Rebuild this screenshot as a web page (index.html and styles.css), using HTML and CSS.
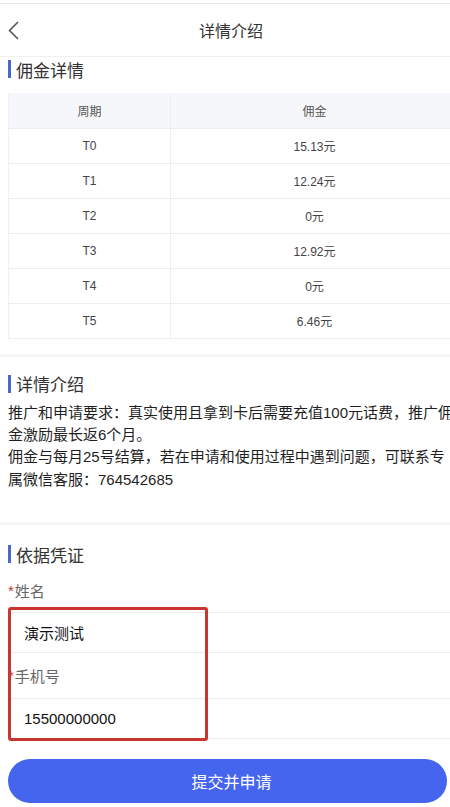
FILE: index.html
```html
<!DOCTYPE html>
<html lang="zh-CN">
<head>
    <meta charset="UTF-8">
    <meta name="viewport" content="width=device-width, initial-scale=1.0">
    <title>详情介绍</title>
    <link rel="stylesheet" href="styles.css">
</head>
<body>
    <div class="page">
        <div class="header">
            <a class="back" href="#">
                <svg width="12" height="19" viewBox="0 0 12 19">
                    <polyline points="10,1 1.5,9.5 10,18" fill="none" stroke="#555" stroke-width="1.6"/>
                </svg>
            </a>
            <div class="header-title">详情介绍</div>
            <div></div>
        </div>

        <div class="section section-commission">
            <h2 class="section-title">佣金详情</h2>
            <table class="commission-table">
                <thead>
                    <tr><th class="col-period">周期</th><th>佣金</th></tr>
                </thead>
                <tbody>
                    <tr><td>T0</td><td>15.13元</td></tr>
                    <tr><td>T1</td><td>12.24元</td></tr>
                    <tr><td>T2</td><td>0元</td></tr>
                    <tr><td>T3</td><td>12.92元</td></tr>
                    <tr><td>T4</td><td>0元</td></tr>
                    <tr><td>T5</td><td>6.46元</td></tr>
                </tbody>
            </table>
        </div>

        <div class="divider"></div>

        <div class="section section-intro">
            <h2 class="section-title">详情介绍</h2>
            <p class="intro-text">推广和申请要求：真实使用且拿到卡后需要充值100元话费，推广佣金激励最长返6个月。</p>
            <p class="intro-text">佣金与每月25号结算，若在申请和使用过程中遇到问题，可联系专属微信客服：764542685</p>
        </div>

        <div class="divider"></div>

        <div class="section section-form">
            <h2 class="section-title">依据凭证</h2>
            <div class="form">
                <div class="field-label"><span class="required">*</span>姓名</div>
                <div class="field-input">演示测试</div>
                <div class="field-label"><span class="required">*</span>手机号</div>
                <div class="field-input">15500000000</div>
                <div class="highlight-box"></div>
            </div>
            <button class="submit-btn">提交并申请</button>
        </div>
    </div>
</body>
</html>
```

FILE: styles.css
```css
*{
    margin: 0;
    padding: 0;
    box-sizing: border-box;
}

html, body {
    overflow: hidden;
    background: #fff;
}

body {
    font-family: 'Liberation Sans', 'Noto Sans CJK SC', sans-serif;
    color: #333;
}

.page {
    width: 466px;
}

.header {
    margin-top: 3px;
    height: 54px;
    border-top: 1px solid #e6e6e6;
    border-bottom: 1px solid #f0f0f0;
    display: grid;
    grid-template-columns: 40px 1fr 40px;
    align-items: center;
    padding: 0 12px 0 8px;
}

.back {
    display: flex;
    align-items: center;
}

.header-title {
    text-align: center;
    font-size: 16px;
    color: #333;
}

.section {
    padding: 0 8px;
}

.section-title {
    display: flex;
    align-items: center;
    height: 24px;
    font-size: 17px;
    font-weight: normal;
    color: #333;
}

.section-title::before {
    content: "";
    width: 3px;
    height: 18px;
    background: #4a67c9;
    margin-right: 5px;
}

.section-commission {
    padding-bottom: 15px;
}

.commission-table {
    margin-top: 12px;
    width: 100%;
    border-collapse: collapse;
    border-left: 1px solid #eef0f4;
    font-size: 12px;
    color: #444;
}

.commission-table th,
.commission-table td {
    height: 35px;
    text-align: center;
    font-weight: normal;
    border-bottom: 1px solid #ebedf1;
}

.commission-table th {
    background: #f5f7fa;
    color: #555;
}

.commission-table .col-period,
.commission-table td:first-child {
    width: 162px;
    border-right: 1px solid #eceef2;
}

.divider {
    height: 3px;
    background: #f5f5f6;
}

.section-intro {
    padding-top: 15px;
    padding-bottom: 31px;
}

.section-intro .section-title {
    margin-bottom: 6px;
}

.intro-text {
    font-size: 15px;
    line-height: 22.4px;
    color: #1f1f1f;
}

.section-form {
    padding-top: 17px;
    padding-bottom: 10px;
}

.form {
    position: relative;
    margin-top: 2px;
}

.field-label {
    height: 45px;
    display: flex;
    align-items: center;
    font-size: 15px;
    color: #666;
}

.form .field-label:first-child {
    height: 44px;
}

.required {
    color: #c0392b;
    margin-right: 1px;
}

.field-input {
    height: 41px;
    display: flex;
    align-items: center;
    padding-left: 16px;
    font-size: 15px;
    color: #111;
    border-top: 1px solid #ececec;
    border-bottom: 1px solid #ececec;
}

.highlight-box {
    position: absolute;
    left: 0;
    top: 39px;
    width: 200px;
    height: 134px;
    border: 3px solid #c8362f;
    border-radius: 3px;
}

.submit-btn {
    display: block;
    margin-top: 20px;
    width: 439px;
    height: 44px;
    border: none;
    border-radius: 22px;
    background: #4665ef;
    color: #fff;
    font-family: inherit;
    font-size: 16px;
    padding-left: 8px;
}
```
